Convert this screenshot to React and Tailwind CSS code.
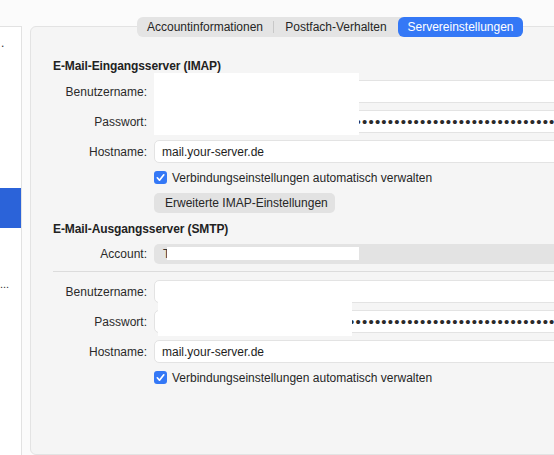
import React from "react";

const font = { fontFamily: '"Liberation Sans", Arial, sans-serif' };

function Check() {
  return (
    <span className="w-[13px] h-[13px] rounded-[3px] bg-[#3478f6] flex items-center justify-center shrink-0">
      <svg width="11" height="11" viewBox="0 0 11 11">
        <path d="M2.3 5.8 L4.5 8.2 L8.8 2.8" fill="none" stroke="white" strokeWidth="1.7" strokeLinecap="round" strokeLinejoin="round" />
      </svg>
    </span>
  );
}

function Row({ label, children, h = "h-[23px]" }) {
  return (
    <div className={`flex items-center ${h}`}>
      <div className="w-[94px] shrink-0 text-right text-[12px] text-[#2a2a2a]">{label}</div>
      <div className="ml-[7px] flex-1 min-w-0 h-full">{children}</div>
    </div>
  );
}

function Field({ children }) {
  return (
    <div className="h-full w-full bg-white border border-[#e3e3e3] rounded-[5px] flex items-center pl-[7px] text-[12px] text-[#1d1d1d] overflow-hidden whitespace-nowrap">
      {children}
    </div>
  );
}

const dots = "•".repeat(70);

function Dots() {
  return <span className="text-[15px] tracking-[1.2px] text-[#2a2a2a] leading-none">{dots}</span>;
}

export default function App() {
  return (
    <div className="w-[554px] h-[455px] overflow-hidden flex bg-[#fbfbfb]" style={font}>
      {/* sidebar */}
      <div className="w-[22px] shrink-0 mt-[26px] bg-white border-r border-t border-[#e2e2e2] flex flex-col text-[12px] text-[#333]">
        <div className="h-[16px] mt-[8px] pl-[1px] leading-[16px]">.</div>
        <div className="h-[40px] mt-[137px] bg-[#2b63d9]"></div>
        <div className="mt-[48px] leading-[16px] text-[11px]">...</div>
      </div>
      {/* main */}
      <div className="w-[600px] shrink-0 ml-[8px] flex flex-col">
        <div className="h-[17px]"></div>
        <div className="relative z-10 flex justify-center">
          <div className="flex items-center h-[20px] bg-[#e4e4e4] rounded-[6px] text-[12px] text-[#262626]">
            <div className="w-[136px] text-center">Accountinformationen</div>
            <div className="w-px h-[12px] bg-[#c8c8c8]"></div>
            <div className="w-[124px] text-center">Postfach-Verhalten</div>
            <div className="w-[125px] h-full rounded-[6px] bg-[#3478f6] text-white flex items-center justify-center">Servereinstellungen</div>
          </div>
        </div>
        <div className="-mt-[11px] relative flex-1 bg-[#f5f5f5] border border-[#e3e3e3] rounded-[6px] px-[22px] pt-[31px]">
          <div className="font-bold text-[12px] text-[#222] h-[16px] leading-[16px] tracking-[-0.1px]">E-Mail-Eingangsserver (IMAP)</div>
          <div className="mt-[6px] flex flex-col gap-[7px]">
            <Row label="Benutzername:"><Field></Field></Row>
            <Row label="Passwort:"><Field><Dots /></Field></Row>
            <Row label="Hostname:"><Field>mail.your-server.de</Field></Row>
          </div>
          <div className="mt-[8px] ml-[101px] flex items-center gap-[5px] h-[13px]">
            <Check />
            <span className="text-[12px] text-[#262626]">Verbindungseinstellungen automatisch verwalten</span>
          </div>
          <div className="mt-[9px] ml-[101px] h-[20px] w-[181px] rounded-[5px] bg-[#e2e2e2] flex items-center pl-[11px] text-[12px] text-[#262626]">
            Erweiterte IMAP-Einstellungen
          </div>
          <div className="mt-[8px] font-bold text-[12px] text-[#222] h-[16px] leading-[16px] tracking-[-0.1px]">E-Mail-Ausgangsserver (SMTP)</div>
          <div className="mt-[7px]">
            <Row label="Account:" h="h-[20px]">
              <div className="h-full w-full bg-[#e3e3e3] rounded-[5px] flex items-center pl-[9px] text-[12px] text-[#333]">T</div>
            </Row>
          </div>
          <div className="mt-[7px] h-px bg-[#dcdcdc]"></div>
          <div className="mt-[8px] flex flex-col gap-[7px]">
            <Row label="Benutzername:"><Field></Field></Row>
            <Row label="Passwort:"><Field><Dots /></Field></Row>
            <Row label="Hostname:"><Field>mail.your-server.de</Field></Row>
          </div>
          <div className="mt-[8px] ml-[101px] flex items-center gap-[5px] h-[13px]">
            <Check />
            <span className="text-[12px] text-[#262626]">Verbindungseinstellungen automatisch verwalten</span>
          </div>

          {/* redaction overlays */}
          <div className="absolute left-[123px] top-[46px] w-[205px] h-[62px] bg-white"></div>
          <div className="absolute left-[136px] top-[220px] w-[192px] h-[13px] bg-white"></div>
          <div className="absolute left-[127px] top-[272px] w-[194px] h-[37px] bg-white"></div>
        </div>
      </div>
    </div>
  );
}
